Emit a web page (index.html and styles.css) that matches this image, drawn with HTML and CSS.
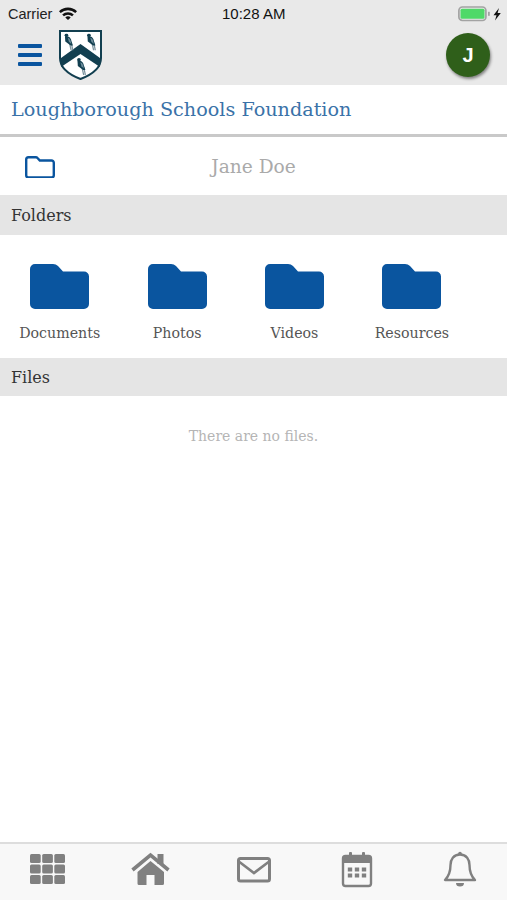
FILE: index.html
```html
<!DOCTYPE html>
<html lang="en">
<head>
  <meta charset="UTF-8" />
  <meta name="viewport" content="width=device-width, initial-scale=1.0" />
  <title>Loughborough Schools Foundation</title>
  <link rel="stylesheet" href="styles.css">
</head>
<body>

  <svg class="defs" width="0" height="0">
    <symbol id="folder" viewBox="0 0 59 45">
      <path d="M0 5a5 5 0 0 1 5-5h18q3 0 5 2l5 5.500h21a5 5 0 0 1 5 5V40a5 5 0 0 1-5 5H5a5 5 0 0 1-5-5z" />
    </symbol>
    <symbol id="bird" viewBox="0 0 9 15">
      <path d="M6 8l1.500 7M4.500 8.500l1.500 6.500" fill="none" stroke="#7d949f" stroke-width="1.100" />
      <circle cx="1.800" cy="1.600" r="1.600" fill="#123f50" />
      <path d="M.5 2.500q4-.8 5.200 2.500l1.800 5.500-2 0L.8 7z" fill="#123f50" />
      <path d="M3 3.800q2 .5 2.500 2.500l.6 3-2.100-2z" fill="#6d8c9a" />
    </symbol>
  </svg>

  <div class="phone">
    <div class="top">
      <div class="status">
        <div class="status-left">
          <span>Carrier</span>
          <svg class="wifi" width="18" height="13" viewBox="0 0 18 13">
            <path d="M0 4.200a13 13 0 0 1 18 0l-1.700 1.900a10.500 10.500 0 0 0-14.600 0zM3.200 7.500a8.500 8.500 0 0 1 11.600 0l-1.700 1.800a6 6 0 0 0-8.200 0zM6.300 10.500a4 4 0 0 1 5.400 0L9 13z" fill="#111" />
          </svg>
        </div>
        <span class="clock">10:28 AM</span>
        <div class="status-right">
          <svg width="44" height="16" viewBox="0 0 44 16">
            <rect x="0.900" y="1" width="27" height="13.500" rx="3.500" fill="none" stroke="#a3a3a3" stroke-width="1.700" />
            <rect x="2.500" y="2.800" width="24" height="10" rx="1.500" fill="#4fd968" />
            <rect x="30" y="5.800" width="1.800" height="4" fill="#a3a3a3" />
            <path d="M41 2L35.500 9.300h3L37 14.500l5.800-7.500h-3.200z" fill="#111" />
          </svg>
        </div>
      </div>
      <div class="header">
        <button class="menu"><span></span><span></span><span></span></button>
        <svg class="crest" width="43" height="50" viewBox="0 0 43 50">
          <path d="M1 1h41v27c0 10-10 17-20.500 21C11 45 1 38 1 28z" fill="#fff" stroke="#123f50" stroke-width="2" />
          <path d="M2 28L21.500 14 41 28v9L21.500 24 2 37z" fill="#123f50" />
          <use href="#bird" x="5" y="3.500" width="11" height="17" />
          <use href="#bird" x="27.500" y="3.500" width="11" height="17" />
          <use href="#bird" x="17.500" y="28" width="11" height="17" />
        </svg>
        <div class="avatar">J</div>
      </div>
    </div>

    <div class="title">Loughborough Schools Foundation</div>

    <div class="crumb">
      <svg class="crumb-icon" width="30" height="22" viewBox="0 0 30 22">
        <path d="M1.200 3.500a2.300 2.300 0 0 1 2.300-2.300h7.300q1 0 1.700.8l2.300 2.500h11.700a2.300 2.300 0 0 1 2.300 2.300v12.400a2.300 2.300 0 0 1-2.300 2.300h-23a2.300 2.300 0 0 1-2.300-2.300z" fill="none" stroke="#0a559f" stroke-width="2.400" />
      </svg>
      <span class="crumb-name">Jane Doe</span>
    </div>

    <div class="section">Folders</div>
    <div class="folders">
      <div class="folder">
        <svg class="folder-icon"><use href="#folder" /></svg>
        <span>Documents</span>
      </div>
      <div class="folder">
        <svg class="folder-icon"><use href="#folder" /></svg>
        <span>Photos</span>
      </div>
      <div class="folder">
        <svg class="folder-icon"><use href="#folder" /></svg>
        <span>Videos</span>
      </div>
      <div class="folder">
        <svg class="folder-icon"><use href="#folder" /></svg>
        <span>Resources</span>
      </div>
    </div>

    <div class="section section-files">Files</div>
    <div class="empty">There are no files.</div>

    <div class="tabs">
      <svg class="tab" viewBox="0 0 44 44">
        <g fill="#808080">
          <rect x="5" y="6" width="10.700" height="9" rx="1.500" /><rect x="17.200" y="6" width="10.700" height="9" rx="1.500" /><rect x="29.300" y="6" width="10.700" height="9" rx="1.500" />
          <rect x="5" y="16.500" width="10.700" height="9" rx="1.500" /><rect x="17.200" y="16.500" width="10.700" height="9" rx="1.500" /><rect x="29.300" y="16.500" width="10.700" height="9" rx="1.500" />
          <rect x="5" y="27" width="10.700" height="9" rx="1.500" /><rect x="17.200" y="27" width="10.700" height="9" rx="1.500" /><rect x="29.300" y="27" width="10.700" height="9" rx="1.500" />
        </g>
      </svg>
      <svg class="tab" viewBox="0 0 44 44">
        <rect x="29.500" y="6" width="6" height="10" fill="#808080" />
        <path d="M4.500 22L22.500 7l18 15" fill="none" stroke="#808080" stroke-width="3.600" />
        <path d="M9.500 24L22.500 13l13.500 11v11.500a1.500 1.500 0 0 1-1.500 1.500H26.500V27h-8v10H11a1.500 1.500 0 0 1-1.500-1.500z" fill="#808080" />
      </svg>
      <svg class="tab" viewBox="0 0 44 44">
        <rect x="6.500" y="10.500" width="31" height="22.500" rx="2" fill="none" stroke="#808080" stroke-width="3" />
        <path d="M7.500 14L22 25l14.500-11" fill="none" stroke="#808080" stroke-width="2.600" />
      </svg>
      <svg class="tab" viewBox="0 0 44 44">
        <rect x="8" y="8" width="28" height="30" rx="2.500" fill="none" stroke="#808080" stroke-width="2.400" />
        <path d="M8 9.500a2 2 0 0 1 2-2h24a2 2 0 0 1 2 2V15H8z" fill="#808080" />
        <rect x="14" y="4" width="3" height="6" rx="1" fill="#808080" />
        <rect x="27" y="4" width="3" height="6" rx="1" fill="#808080" />
        <g fill="#808080">
          <rect x="12.800" y="19.500" width="4.400" height="4" /><rect x="19.800" y="19.500" width="4.400" height="4" /><rect x="26.800" y="19.500" width="4.400" height="4" />
          <rect x="12.800" y="25.500" width="4.400" height="4" /><rect x="19.800" y="25.500" width="4.400" height="4" /><rect x="26.800" y="25.500" width="4.400" height="4" />
        </g>
      </svg>
      <svg class="tab" viewBox="0 0 44 44">
        <path d="M22 6.500c-6.500 0-9.500 5-9.500 10.500 0 8-2.500 12-5.500 15h30c-3-3-5.500-7-5.500-15 0-5.500-3-10.500-9.500-10.500z" fill="none" stroke="#808080" stroke-width="2.400" stroke-linejoin="round" />
        <circle cx="22" cy="5.500" r="1.800" fill="#808080" />
        <path d="M18 35h8a4 3.500 0 0 1-8 0z" fill="#808080" />
      </svg>
    </div>
  </div>

</body>
</html>
```

FILE: styles.css
```css
* {
  box-sizing: border-box;
}

body {
  margin: 0;
  background-color: white;
  font-family: 'DejaVu Serif', serif;
}

.defs {
  display: block;
}

.phone {
  height: 900px;
  display: flex;
  flex-direction: column;
}

.top {
  height: 85px;
  background-color: #e9e9e9;
}

.status {
  height: 27px;
  display: flex;
  align-items: center;
  justify-content: space-between;
  padding: 0 5px 0 8px;
  position: relative;
  font-family: 'Liberation Sans', sans-serif;
  font-size: 14.500px;
  color: #222;
}

.status-left {
  display: flex;
  align-items: center;
  gap: 7px;
}

.clock {
  position: absolute;
  left: 222px;
  top: 5px;
  font-size: 15px;
  color: #111;
}

.status-right {
  display: flex;
}

.header {
  height: 58px;
  display: flex;
  align-items: flex-start;
  padding: 3px 17px 0 18px;
}

.menu {
  width: 24px;
  height: 22px;
  margin-top: 14px;
  padding: 0;
  border: none;
  background: none;
  display: flex;
  flex-direction: column;
  justify-content: space-between;
}

.menu span {
  display: block;
  height: 4px;
  border-radius: 1px;
  background-color: #0a559f;
}

.crest {
  margin-left: 17px;
}

.avatar {
  width: 44px;
  height: 44px;
  margin-left: auto;
  margin-top: 3px;
  border-radius: 50%;
  background-color: #2f5f1a;
  color: white;
  font-family: 'Liberation Sans', sans-serif;
  font-size: 20px;
  font-weight: bold;
  display: flex;
  align-items: center;
  justify-content: center;
  box-shadow: 1px 2px 3px rgba(0, 0, 0, 0.45);
}

.title {
  height: 52px;
  padding: 13px 11px 0;
  border-bottom: 3px solid #c9c9c9;
  font-size: 19.200px;
  color: #3a72a8;
  white-space: nowrap;
}

.crumb {
  height: 58px;
  display: flex;
  align-items: center;
  justify-content: center;
  position: relative;
}

.crumb-icon {
  position: absolute;
  left: 25px;
  top: 19px;
}

.crumb-name {
  font-size: 18.600px;
  color: #aaaaaa;
}

.section {
  height: 40px;
  padding: 0 11px;
  display: flex;
  align-items: center;
  background-color: #e5e5e5;
  font-size: 16px;
  color: #333;
}

.folders {
  height: 123px;
  padding: 29px 0 0 1px;
  display: grid;
  grid-template-columns: repeat(4, 117.400px);
  align-content: start;
}

.folder {
  display: flex;
  flex-direction: column;
  align-items: center;
  font-size: 14.200px;
  color: #555;
}

.folder-icon {
  width: 59px;
  height: 45px;
  margin-bottom: 16px;
  fill: #0a559f;
}

.section-files {
  height: 38px;
}

.empty {
  padding-top: 32px;
  text-align: center;
  font-size: 14px;
  color: #b5b5b5;
}

.tabs {
  margin-top: auto;
  height: 58px;
  padding: 4px 25px 0;
  display: flex;
  justify-content: space-between;
  background-color: #f8f8f8;
  border-top: 2px solid #dddddd;
}

.tab {
  width: 44px;
  height: 44px;
}
```
